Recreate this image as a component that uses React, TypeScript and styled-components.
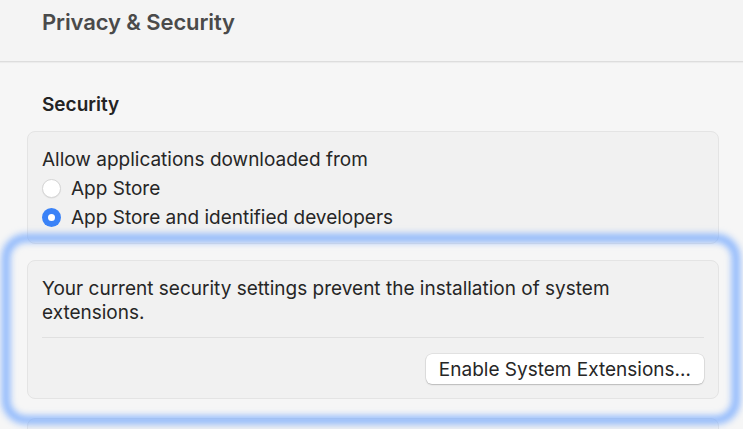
import React from 'react';
import styled, {createGlobalStyle} from 'styled-components';

const GlobalStyle = createGlobalStyle`
  html, body {
    margin: 0;
    padding: 0;
    background: #f6f6f6;
    overflow: hidden;
  }
  body {
    font-family: Inter, "Liberation Sans", sans-serif;
    -webkit-font-smoothing: antialiased;
  }
`;

function App() {
    return (
        <>
            <GlobalStyle/>
            <Page>
                <Header>
                    <Title>Privacy &amp; Security</Title>
                </Header>
                <Content>
                    <SectionTitle>Security</SectionTitle>
                    <Card>
                        <Line>Allow applications downloaded from</Line>
                        <RadioRow>
                            <Radio/>
                            <span>App Store</span>
                        </RadioRow>
                        <RadioRow>
                            <Radio checked/>
                            <span>App Store and identified developers</span>
                        </RadioRow>
                    </Card>
                    <Highlighted>
                        <Glow/>
                        <Card>
                            <Message>
                                Your current security settings prevent the installation of system
                                extensions.
                            </Message>
                            <Divider/>
                            <Actions>
                                <Button>Enable System Extensions…</Button>
                            </Actions>
                        </Card>
                    </Highlighted>
                    <NextCard/>
                </Content>
            </Page>
        </>
    );
}

const Page = styled.div`
  width: 743px;
  height: 429px;
  overflow: hidden;
  background: #f6f6f6;
  color: #262626;
`;

const Header = styled.header`
  height: 61px;
  display: flex;
  align-items: flex-start;
  padding-left: 42px;
  background: #f4f4f4;
  border-bottom: 1px solid #dddddd;
  box-shadow: 0 1px 1px rgba(0, 0, 0, 0.04);
`;

const Title = styled.h1`
  margin: 7px 0 0;
  font-size: 22px;
  line-height: 30px;
  font-weight: 600;
  color: #4a4a4a;
  letter-spacing: -0.1px;
`;

const Content = styled.main`
  padding: 0 24px 0 27px;
`;

const SectionTitle = styled.h2`
  margin: 31px 0 0 15px;
  font-size: 19px;
  line-height: 24px;
  font-weight: 600;
  color: #232323;
  height: 38px;
`;

const Card = styled.section`
  background: #f1f1f1;
  border: 1px solid #e4e4e4;
  border-radius: 8px;
  padding: 13px 14px 11px;
`;

const Line = styled.div`
  font-size: 19px;
  line-height: 29px;
`;

const RadioRow = styled.label`
  display: flex;
  align-items: center;
  gap: 10px;
  font-size: 19px;
  line-height: 29px;
`;

const Radio = styled.span<{ checked?: boolean }>`
  width: 19px;
  height: 19px;
  box-sizing: border-box;
  border-radius: 50%;
  display: flex;
  align-items: center;
  justify-content: center;
  background: ${p => p.checked ? '#3a82f7' : '#ffffff'};
  border: ${p => p.checked ? 'none' : '1px solid #d6d6d6'};
  box-shadow: ${p => p.checked ? 'none' : '0 0.5px 1px rgba(0,0,0,0.08)'};

  &::after {
    content: '';
    display: ${p => p.checked ? 'block' : 'none'};
    width: 7px;
    height: 7px;
    border-radius: 50%;
    background: #ffffff;
  }
`;

const Highlighted = styled.div`
  position: relative;
  margin-top: 16px;

  & > ${Card} {
    padding: 16px 14px 14px;
  }
`;

const Glow = styled.div`
  position: absolute;
  left: -25px;
  top: -26px;
  right: -21px;
  bottom: -25px;
  border: 8px solid rgba(110, 165, 255, 0.8);
  border-radius: 24px;
  filter: blur(3.5px);
  pointer-events: none;
`;

const Message = styled.p`
  margin: 0;
  font-size: 19px;
  line-height: 24px;
`;

const Divider = styled.hr`
  margin: 12px 0 16px;
  border: none;
  border-top: 1px solid #e0e0e0;
`;

const Actions = styled.div`
  display: flex;
  justify-content: flex-end;
`;

const Button = styled.button`
  height: 30px;
  padding: 0 13px;
  font-family: inherit;
  font-size: 19px;
  color: #262626;
  background: #ffffff;
  border: none;
  border-radius: 6px;
  box-shadow: 0 0 0 0.5px rgba(0, 0, 0, 0.12), 0 1px 1.5px rgba(0, 0, 0, 0.18);
`;

const NextCard = styled.div`
  margin-top: 19px;
  height: 40px;
  background: #f1f1f1;
  border: 1px solid #e4e4e4;
  border-radius: 8px;
`;

export default App;
